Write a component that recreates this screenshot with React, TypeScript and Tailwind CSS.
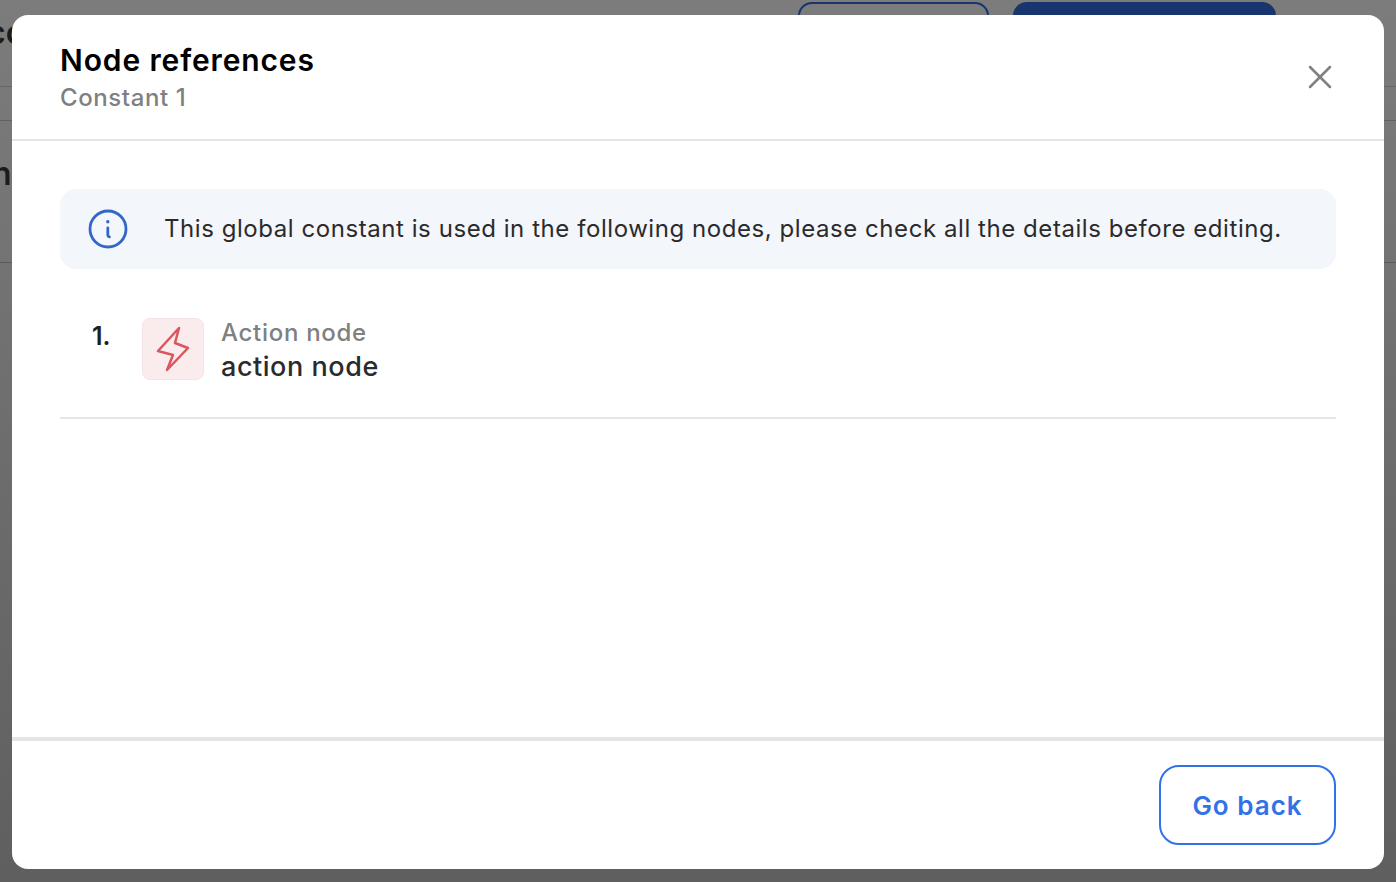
import React from 'react';
import { X } from 'lucide-react';

const font = "font-['Inter','Liberation_Sans',sans-serif]";

// page behind the dialog, only slivers of it show
const Backdrop = () => (
  <div className="h-full w-full bg-gradient-to-b from-[#7c7c7c] to-[#5f5f5f] flex flex-col">
    <div className="flex items-start justify-end gap-[24px] pt-[2px] pr-[120px] h-[86px]">
      <div className="w-[191px] h-[40px] rounded-[14px] border-2 border-[#19356d]" />
      <div className="w-[263px] h-[40px] rounded-[14px] bg-[#19356d]" />
    </div>
    <div className="h-[1px] bg-[#656565]" />
    <div className="h-[33px]" />
    <div className="h-[1px] bg-[#606060]" />
    <div className="h-[141px]" />
    <div className="h-[1px] bg-[#5a5a5a]" />
  </div>
);

const InfoIcon = () => (
  <svg width="40" height="40" viewBox="0 0 40 40" fill="none" stroke="#3367c7" strokeWidth="2.8" strokeLinecap="round" strokeLinejoin="round">
    <circle cx="20" cy="20" r="18" />
    <path d="M19.8 19v6.5c0 1.4 0.6 2.2 1.6 2.4" />
    <circle cx="19.8" cy="12.8" r="1.7" fill="#3367c7" stroke="none" />
  </svg>
);

const BoltIcon = () => (
  <svg width="40" height="48" viewBox="0 0 40 48" fill="none" stroke="#d9585f" strokeWidth="2.5" strokeLinejoin="round">
    <path d="M26 3L5 26L20 30L14 45L35 23L22 18Z" />
  </svg>
);

export default function App() {
  return (
    <div className={`relative w-[1396px] h-[882px] overflow-hidden ${font}`}>
      <Backdrop />
      <div className="absolute left-[-13px] top-[14px] text-[32px] font-semibold leading-[38px] text-[#1c1c1c]">cc</div>
      <div className="absolute left-[-8px] top-[155px] text-[32px] font-semibold leading-[38px] text-[#1c1c1c]">n</div>
      <div className="absolute inset-0 pt-[15px] pr-[12px] pb-[13px] pl-[12px] flex">
        <div className="flex-1 flex flex-col bg-white rounded-[16px] overflow-hidden">
          {/* Header */}
          <div className="h-[126px] shrink-0 flex items-center justify-between pl-[48px] pr-[44px] border-b-2 border-[#e5e5e5]">
            <div className="flex flex-col pt-[4px]">
              <h2 className="text-[30px] leading-[38px] font-semibold text-black tracking-[0.87px]">Node references</h2>
              <span className="text-[24px] leading-[38px] font-medium text-[#808080] tracking-[0.6px]">Constant 1</span>
            </div>
            <X size={40} strokeWidth={1.5} className="text-[#808080]" />
          </div>

          {/* Body */}
          <div className="flex-1 px-[48px] pt-[48px]">
            <div className="h-[80px] rounded-[16px] bg-[#f3f6fb] flex items-center pl-[28px] gap-[36px]">
              <InfoIcon />
              <span className="text-[24px] tracking-[0.56px] text-[#2b2b2b] whitespace-nowrap">This global constant is used in the following nodes, please check all the details before editing.</span>
            </div>
            <div className="h-[150px] flex items-start pl-[32px] pt-[49px] border-b-2 border-[#e5e5e5]">
              <span className="w-[50px] text-[25px] leading-[38px] font-semibold text-[#1f1f1f] -mt-[1px]">1.</span>
              <div className="w-[62px] h-[62px] rounded-[8px] bg-[#faeced] border border-[#f6e3e3] flex items-center justify-center">
                <BoltIcon />
              </div>
              <div className="ml-[17px] flex flex-col -mt-[1px]">
                <span className="text-[24px] leading-[32px] font-medium text-[#808080] tracking-[0.7px]">Action node</span>
                <span className="text-[27px] leading-[36px] font-medium text-[#2b2b2b] tracking-[0.55px]">action node</span>
              </div>
            </div>
          </div>

          {/* Footer */}
          <div className="h-[132px] shrink-0 border-t-4 border-[#e5e5e5] flex items-center justify-end pr-[48px]">
            <button className="w-[177px] h-[80px] rounded-[20px] border-2 border-[#3272e8] text-[#3272e8] text-[26px] font-semibold tracking-[1px]">Go back</button>
          </div>
        </div>
      </div>
    </div>
  );
}
